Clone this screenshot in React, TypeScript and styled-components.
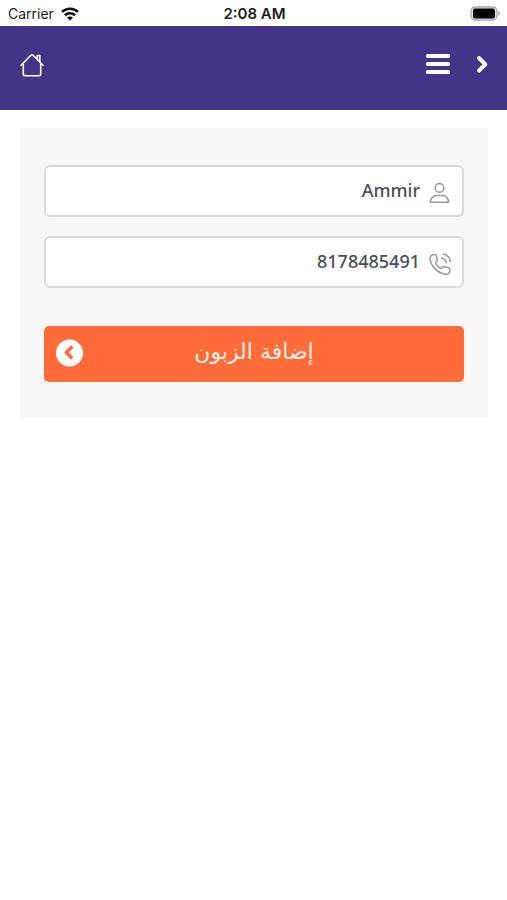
import React from "react";
import styled, { createGlobalStyle } from "styled-components";

const GlobalStyle = createGlobalStyle`
  *, *::before, *::after { box-sizing: border-box; }
  body {
    margin: 0;
    background: #fff;
    font-family: "Noto Sans", "DejaVu Sans", sans-serif;
  }
`;

const StatusBar = styled.div`
  display: grid;
  grid-template-columns: 1fr auto 1fr;
  align-items: center;
  height: 26px;
  padding: 1px 6px 0 8px;
  color: #1c1c1c;
  font: 500 14px/20px Inter, sans-serif;
`;

const Carrier = styled.div`
  display: flex;
  align-items: center;
  gap: 7px;
  font-weight: 400;
`;

const Clock = styled.div`
  font-weight: 600;
  font-size: 15px;
`;

const Battery = styled.div`
  display: flex;
  justify-content: flex-end;
`;

const Header = styled.header`
  display: flex;
  align-items: center;
  justify-content: space-between;
  height: 84px;
  padding: 0 16px 6px 18px;
  background: #433488;
`;

const HeaderActions = styled.nav`
  display: flex;
  align-items: center;
  gap: 24px;
`;

const IconButton = styled.button`
  display: flex;
  padding: 0;
  border: 0;
  background: none;
  color: #fff;
  cursor: pointer;
`;

const HomeLink = styled.a`
  display: flex;
  color: #fff;
`;

const Form = styled.form`
  display: flex;
  flex-direction: column;
  gap: 19px;
  margin: 18px 19px 0 20px;
  padding: 37px 24px 36px;
  background: #f7f7f7;
`;

const Field = styled.label`
  display: flex;
  align-items: center;
  gap: 9px;
  height: 52px;
  padding: 0 10px;
  border: 2px solid #dadada;
  border-radius: 6px;
  background: #fff;
  color: #999;

  svg {
    flex: none;
    margin-top: 4px;
  }
`;

const TextInput = styled.input`
  flex: 1;
  min-width: 0;
  height: 48px;
  padding: 0 0 2px;
  border: 0;
  outline: 0;
  background: none;
  color: #4c4f52;
  font: 500 18px/24px "Noto Sans", sans-serif;
  text-align: right;
`;

const SubmitButton = styled.button`
  display: grid;
  grid-template-columns: 28px 1fr 28px;
  align-items: center;
  height: 56px;
  margin-top: 19px;
  padding: 0 11px 2px;
  border: 0;
  border-radius: 5px;
  background: #ff6b39;
  color: #fff1e8;
  font: 400 22px/28px "DejaVu Sans", sans-serif;
  cursor: pointer;
`;

const SubmitText = styled.span`
  grid-column: 2;
  padding-bottom: 2px;
`;

const WifiIcon = () => (
  <svg width="18" height="14" viewBox="0 0 18 14" fill="none" stroke="#111" strokeWidth="2.6" aria-hidden="true">
    <path d="M1 4.9C5.4.7 12.6.7 17 4.9" />
    <path d="M3.9 8.2c2.9-2.7 7.3-2.7 10.2 0" />
    <path d="M6.1 10.6 9 13.7l2.9-3.1c-1.6-1.6-4.2-1.6-5.8 0Z" fill="#111" stroke="none" />
  </svg>
);

const BatteryIcon = () => (
  <svg width="31" height="15" viewBox="0 0 31 15" aria-hidden="true">
    <rect x="1" y="1" width="26" height="13" rx="4" fill="#e8e8e8" stroke="#aaa" strokeWidth="1.3" />
    <rect x="3" y="2.500" width="22" height="10" rx="2" fill="#000" />
    <path d="M28.4 5v5c2-.8 2-4.2 0-5Z" fill="#aaa" />
  </svg>
);

const HomeIcon = () => (
  <svg width="28" height="28" viewBox="0 0 28 28" fill="none" stroke="currentColor" strokeWidth="1.6" strokeLinecap="round" strokeLinejoin="round" aria-hidden="true">
    <path d="m3 14.3 9.9-10.1c.7-.7 1.5-.7 2.2 0L25 14.3" />
    <path d="M5.3 12.4V23c0 1 .7 1.7 1.7 1.7h14c1 0 1.7-.7 1.7-1.7V12.4" />
    <path d="M19.3 7.4V4.500h2.500v6" />
  </svg>
);

const MenuIcon = () => (
  <svg width="24" height="22" viewBox="0 0 24 22" fill="currentColor" aria-hidden="true">
    <rect x="0" y="0" width="24" height="4" rx="1.5" />
    <rect x="0" y="8" width="24" height="4" rx="1.5" />
    <rect x="0" y="16" width="24" height="4" rx="1.5" />
  </svg>
);

const NextIcon = () => (
  <svg width="17" height="20" viewBox="0 0 17 20" fill="none" stroke="currentColor" strokeWidth="4" strokeLinecap="round" strokeLinejoin="round" aria-hidden="true">
    <path d="m5 3 6.300 6.300-6.300 6.300" />
  </svg>
);

const UserIcon = () => (
  <svg width="23" height="24" viewBox="0 0 23 24" fill="none" stroke="currentColor" strokeWidth="1.5" strokeLinejoin="round" aria-hidden="true">
    <circle cx="10.5" cy="6.9" r="4.300" />
    <path d="M1.500 21.300c-.6-3.300 2.300-6.800 6.500-6.800h5c4.200 0 7.100 3.500 6.500 6.800Z" />
  </svg>
);

const PhoneIcon = () => (
  <svg width="23" height="24" viewBox="0 0 23 24" fill="none" stroke="currentColor" strokeWidth="1.5" strokeLinecap="round" strokeLinejoin="round" aria-hidden="true">
    <path d="M2.800 3.100C1.200 3.900.7 5.100 1 7c1 7.100 7 13.600 14.500 15 2 .4 4 .3 4.800-1.300.7-1.300.8-2.700.3-4-.2-.7-.7-1-1.400-1.200l-4.100-1c-1.200-.2-1.700.2-2 1.100-.3 1.100-1.200 1.100-2.100.5-1.800-1.200-3.300-2.800-4.300-4.700-.4-.9-.2-1.600.7-1.900.9-.4 1.200-.9 1-1.900l-1-3.600c-.2-.9-.7-1.400-1.600-1.500-1-.1-2 .1-3 .6Z" />
    <path d="M12.500 6c2.700.4 4.500 2.100 4.900 4.800M14 2.100c3.900.7 6.700 3.500 7.300 7.200" />
  </svg>
);

const SubmitIcon = () => (
  <svg width="28" height="28" viewBox="0 0 28 28" aria-hidden="true">
    <circle cx="14.500" cy="14" r="13.500" fill="#fff" />
    <path d="m17.300 7.500-6 6 6 6" fill="none" stroke="#ff6b39" strokeWidth="3.600" strokeLinejoin="round" />
  </svg>
);

export default function App() {
  return (
    <>
      <GlobalStyle />
      <StatusBar>
        <Carrier>Carrier <WifiIcon /></Carrier>
        <Clock>2:08 AM</Clock>
        <Battery><BatteryIcon /></Battery>
      </StatusBar>
      <Header>
        <HomeLink href="#home" aria-label="الرئيسية"><HomeIcon /></HomeLink>
        <HeaderActions>
          <IconButton type="button" aria-label="القائمة"><MenuIcon /></IconButton>
          <IconButton type="button" aria-label="رجوع"><NextIcon /></IconButton>
        </HeaderActions>
      </Header>
      <main>
        <Form onSubmit={(event: React.FormEvent) => event.preventDefault()}>
          <Field>
            <TextInput type="text" aria-label="الاسم" defaultValue="Ammir" />
            <UserIcon />
          </Field>
          <Field>
            <TextInput type="tel" aria-label="رقم الهاتف" defaultValue="8178485491" />
            <PhoneIcon />
          </Field>
          <SubmitButton type="submit">
            <SubmitIcon />
            <SubmitText lang="ar" dir="rtl">إضافة الزبون</SubmitText>
          </SubmitButton>
        </Form>
      </main>
    </>
  );
}
